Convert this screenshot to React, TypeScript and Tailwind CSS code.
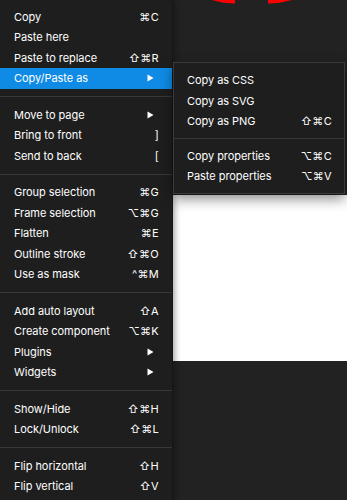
import React from "react";

type Item = { label: string; sc?: string; sub?: boolean; active?: boolean } | "sep";

const main: Item[] = [
  { label: "Copy", sc: "⌘C" },
  { label: "Paste here" },
  { label: "Paste to replace", sc: "⇧⌘R" },
  { label: "Copy/Paste as", sub: true, active: true },
  "sep",
  { label: "Move to page", sub: true },
  { label: "Bring to front", sc: "]" },
  { label: "Send to back", sc: "[" },
  "sep",
  { label: "Group selection", sc: "⌘G" },
  { label: "Frame selection", sc: "⌥⌘G" },
  { label: "Flatten", sc: "⌘E" },
  { label: "Outline stroke", sc: "⇧⌘O" },
  { label: "Use as mask", sc: "^⌘M" },
  "sep",
  { label: "Add auto layout", sc: "⇧A" },
  { label: "Create component", sc: "⌥⌘K" },
  { label: "Plugins", sub: true },
  { label: "Widgets", sub: true },
  "sep",
  { label: "Show/Hide", sc: "⇧⌘H" },
  { label: "Lock/Unlock", sc: "⇧⌘L" },
  "sep",
  { label: "Flip horizontal", sc: "⇧H" },
  { label: "Flip vertical", sc: "⇧V" },
];

const sub: Item[] = [
  { label: "Copy as CSS" },
  { label: "Copy as SVG" },
  { label: "Copy as PNG", sc: "⇧⌘C" },
  "sep",
  { label: "Copy properties", sc: "⌥⌘C" },
  { label: "Paste properties", sc: "⌥⌘V" },
];

const font = { fontFamily: "Inter, 'DejaVu Sans', sans-serif" };

function Arrow() {
  return (
    <svg width="7" height="8" viewBox="0 0 7 8" className="mr-[5px]">
      <path d="M0.5 0.5 L6.5 4 L0.5 7.5 Z" fill="#ffffff" />
    </svg>
  );
}

function Rows({ items, pl, pr, sepClass }: { items: Item[]; pl: string; pr: string; sepClass: string }) {
  return (
    <>
      {items.map((it, i) =>
        it === "sep" ? (
          <div key={i} className={sepClass}>
            <div className="h-px w-full bg-[#383838]" />
          </div>
        ) : (
          <div
            key={i}
            className={`flex h-[20.5px] items-center justify-between ${pl} ${pr} ${
              it.active ? "bg-[#0f8be6]" : ""
            }`}
          >
            <span className="text-[11px] tracking-[-0.05px] text-white">{it.label}</span>
            {it.sub ? (
              <Arrow />
            ) : it.sc ? (
              <span className="text-[11px] tracking-[0.3px] text-white">{it.sc}</span>
            ) : null}
          </div>
        )
      )}
    </>
  );
}

export default function App() {
  return (
    <div className="relative flex h-[500px] w-[347px] overflow-hidden bg-[#222222]" style={font}>
      <div className="relative z-10 flex w-[173px] shrink-0 flex-col border-r border-[#161616] bg-[#1e1e1e] pt-[6.5px] shadow-[2px_0_6px_rgba(0,0,0,0.35)]">
        <Rows items={main} pl="pl-[14px]" pr="pr-[13px]" sepClass="py-[7.5px]" />
      </div>
      <div className="flex flex-1 flex-col">
        <div className="h-[195px]" />
        <div className="h-[166px] bg-white" />
      </div>
      <svg className="absolute left-0 top-0" width="347" height="6" viewBox="0 0 347 6">
        <path d="M212 0 Q224 3.5 235 3.6 L235 0 Z" fill="#ff0000" />
        <path d="M268 0 L268 3.6 Q280 3.5 292 0 Z" fill="#ff0000" />
      </svg>
      <div className="absolute left-[173px] top-[62px] z-20 flex w-[172px] flex-col border border-[#3a3a3a] bg-[#1e1e1e] pt-[7px] pb-[6px] shadow-[0_5px_12px_rgba(0,0,0,0.45)]">
        <Rows items={sub} pl="pl-[13px]" pr="pr-[12px]" sepClass="py-[6.5px]" />
      </div>
    </div>
  );
}
